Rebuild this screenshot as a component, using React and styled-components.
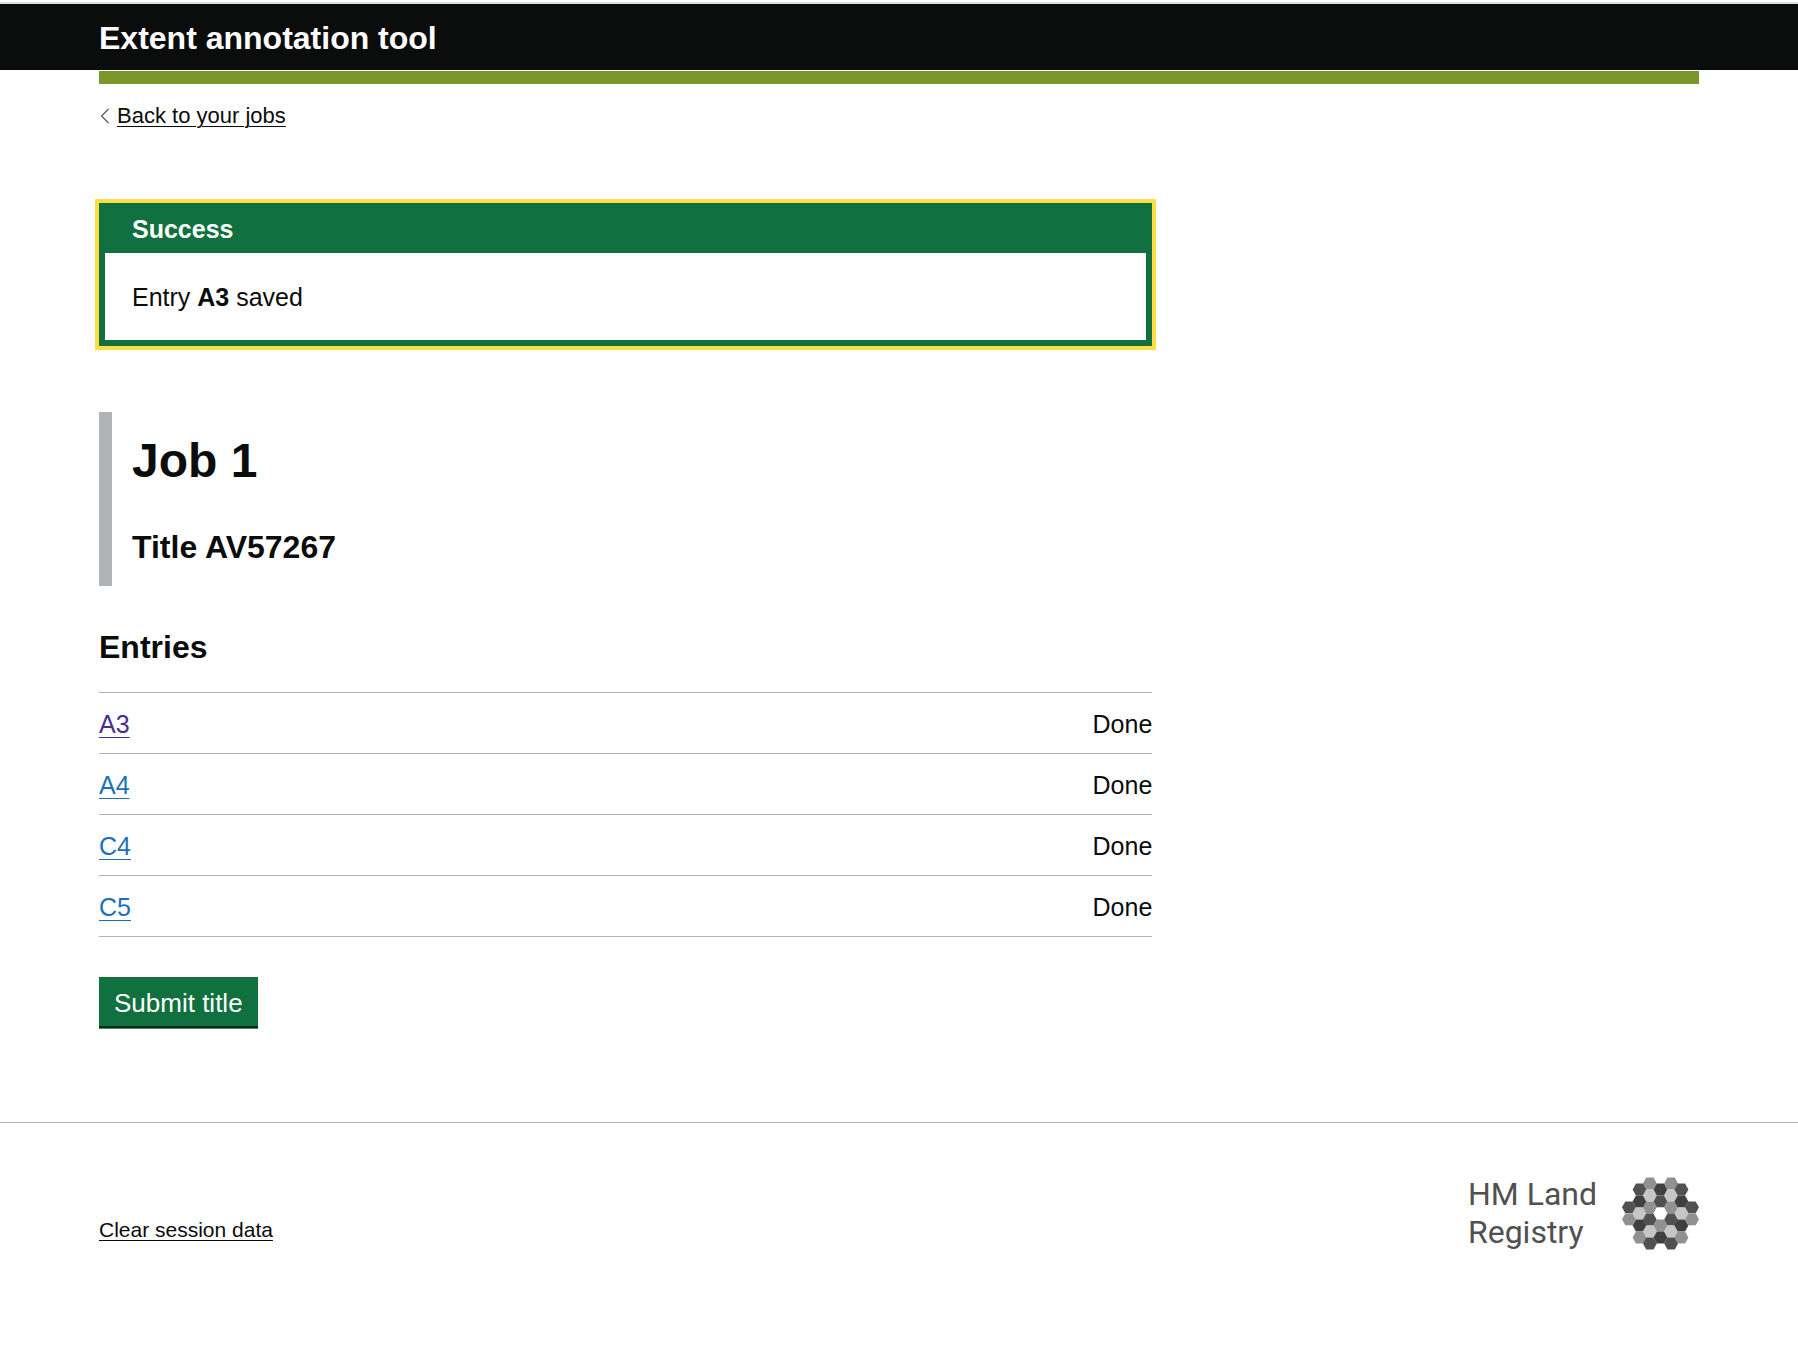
import React from "react";
import styled, { createGlobalStyle } from "styled-components";

const GlobalStyle = createGlobalStyle`
  *, *::before, *::after { box-sizing: border-box; }
  body {
    margin: 0;
    background: #fff;
    color: #0b0c0c;
    font-family: "Liberation Sans", Arial, Helvetica, sans-serif;
    font-size: 25px;
    line-height: 32px;
  }
  h1, h2, p, ul { margin: 0; padding: 0; }
`;

const Container = styled.div`
  margin: 0 99px;
`;

const Header = styled.header`
  margin-top: 2px;
  border-top: 2px solid #dedfdf;
  padding: 18px 0 16px;
  background: #0b0c0c;
`;

const ServiceName = styled.a`
  display: block;
  color: #fff;
  font-size: 32px;
  font-weight: 700;
  line-height: 32px;
  text-decoration: none;
`;

const BrandBar = styled.div`
  height: 13px;
  margin-top: 1px;
  background: #7b972b;
`;

const PlainLink = styled.a`
  color: #0b0c0c;
  font-size: 21px;
  line-height: 24px;
  text-decoration-thickness: 1px;
  text-underline-offset: 3px;
`;

const BackLink = styled(PlainLink)`
  font-size: 22px;
`;

const BackRow = styled.nav`
  display: flex;
  align-items: center;
  gap: 8px;
  padding: 20px 0 0 1px;
`;

const MainColumn = styled.main`
  width: calc((100% + 40px) * 2 / 3 - 40px);
  padding: 75px 0 96px;
`;

const Banner = styled.section`
  border: 6px solid #11703f;
  outline: 4px solid #ffdd43;
`;

const BannerTitle = styled.h2`
  padding: 4px 27px 8px;
  background: #11703f;
  color: #fff;
  font-size: 25px;
  line-height: 32px;
`;

const BannerBody = styled.p`
  padding: 28px 27px 27px;
`;

const JobPanel = styled.section`
  margin: 66px 0 45px;
  padding: 23px 20px;
  border-left: 13px solid #b1b4b6;
`;

const JobHeading = styled.h1`
  margin-bottom: 44px;
  font-size: 48px;
  line-height: 52px;
`;

const Heading = styled.h2`
  font-size: 32px;
  line-height: 32px;
`;

const EntryList = styled.ul`
  margin: 29px 0 40px;
  border-top: 1px solid #b1b4b6;
  list-style: none;
`;

const EntryRow = styled.li`
  display: flex;
  justify-content: space-between;
  padding: 15px 0 13px;
  border-bottom: 1px solid #b1b4b6;
`;

const EntryLink = styled.a`
  color: ${(p) => (p.$visited ? "#4c2c92" : "#1d70b8")};
  text-decoration-thickness: 1px;
  text-underline-offset: 4px;
`;

const SubmitButton = styled.button`
  display: block;
  padding: 10px 15px 7px;
  border: 0;
  background: #11703f;
  box-shadow: 0 2px 0 #002d18, 0 3px 0 #4f8068;
  color: #fff;
  font: inherit;
  font-size: 26px;
  cursor: pointer;
`;

const Footer = styled.footer`
  padding: 52px 0;
  border-top: 1px solid #b1b4b6;
`;

const FooterRow = styled(Container)`
  display: flex;
  align-items: flex-end;
  justify-content: space-between;
  line-height: 24px;
`;

const FooterNav = styled.nav`
  display: flex;
  padding-bottom: 9px;
`;

const Brand = styled.a`
  display: flex;
  align-items: center;
  gap: 25px;
  color: #505050;
  text-decoration: none;
`;

const BrandName = styled.span`
  font-family: Roboto, "Liberation Sans", sans-serif;
  font-size: 32px;
  font-weight: 400;
  line-height: 38px;
`;

const SHADES = { k: "#404040", d: "#515151", m: "#919191", l: "#c6c6c6", w: "#ffffff" };

// Each column lists its hexagons from top to bottom, starting at height y.
const COLUMNS = [
  { x: 21, y: 91, cells: "dm" },
  { x: 53, y: 37, cells: "dklkm" },
  { x: 84, y: 19, cells: "mlmdld" },
  { x: 116, y: 37, cells: "kdwmk" },
  { x: 148, y: 19, cells: "mlmdld" },
  { x: 179, y: 37, cells: "dklkm" },
  { x: 211, y: 91, cells: "dm" },
];

function HexLogo() {
  return (
    <svg width="77" height="73" viewBox="0 0 232 219" aria-hidden="true">
      {COLUMNS.flatMap(({ x, y, cells }) =>
        [...cells].map((shade, i) => {
          const cy = y + i * 36.2;
          return (
            <polygon
              key={`${x}-${i}`}
              fill={SHADES[shade]}
              points={`${x - 21},${cy} ${x - 11},${cy - 18} ${x + 11},${cy - 18} ${x + 21},${cy} ${x + 11},${cy + 18} ${x - 11},${cy + 18}`}
            />
          );
        })
      )}
    </svg>
  );
}

const ENTRIES = [
  { id: "A3", status: "Done", visited: true },
  { id: "A4", status: "Done" },
  { id: "C4", status: "Done" },
  { id: "C5", status: "Done" },
];

export default function App() {
  return (
    <>
      <GlobalStyle />
      <Header>
        <Container>
          <ServiceName href="#home">Extent annotation tool</ServiceName>
        </Container>
      </Header>
      <Container>
        <BrandBar />
        <BackRow aria-label="Back">
          <svg width="9" height="16" viewBox="0 0 9 16" aria-hidden="true">
            <path d="M8.5 1 L1.5 8 L8.5 15" fill="none" stroke="#505a5f" strokeWidth="1.2" />
          </svg>
          <BackLink href="#jobs">Back to your jobs</BackLink>
        </BackRow>
        <MainColumn>
          <Banner role="alert" aria-labelledby="banner-title">
            <BannerTitle id="banner-title">Success</BannerTitle>
            <BannerBody>
              Entry <strong>A3</strong> saved
            </BannerBody>
          </Banner>
          <JobPanel>
            <JobHeading>Job 1</JobHeading>
            <Heading>Title AV57267</Heading>
          </JobPanel>
          <Heading>Entries</Heading>
          <EntryList>
            {ENTRIES.map((entry) => (
              <EntryRow key={entry.id}>
                <EntryLink href={`#${entry.id}`} $visited={entry.visited}>
                  {entry.id}
                </EntryLink>
                <span>{entry.status}</span>
              </EntryRow>
            ))}
          </EntryList>
          <SubmitButton type="submit">Submit title</SubmitButton>
        </MainColumn>
      </Container>
      <Footer>
        <FooterRow>
          <FooterNav aria-label="Footer">
            <PlainLink href="#clear">Clear session data</PlainLink>
          </FooterNav>
          <Brand href="#land-registry">
            <BrandName>
              HM Land
              <br />
              Registry
            </BrandName>
            <HexLogo />
          </Brand>
        </FooterRow>
      </Footer>
    </>
  );
}
